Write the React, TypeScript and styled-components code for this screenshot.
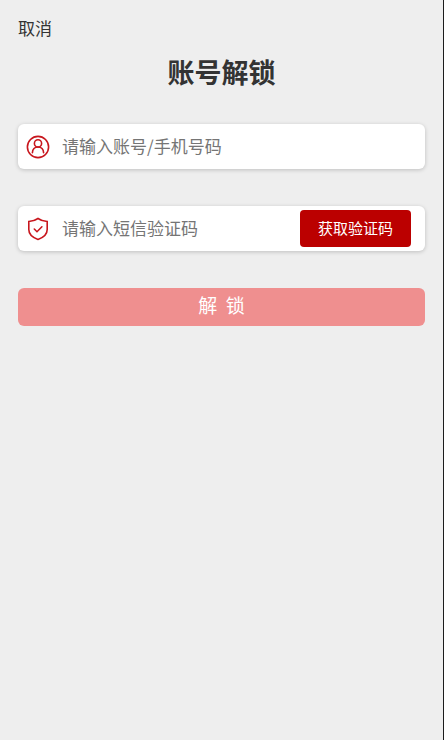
import React, { useState } from "react";
import styled, { createGlobalStyle } from "styled-components";

const GlobalStyle = createGlobalStyle`
  *, *::before, *::after { box-sizing: border-box; }
  body { margin: 0; background: #eeeeee; }
  body, button, input {
    font-family: "Noto Sans CJK SC", "Noto Sans", sans-serif;
  }
`;

const Page = styled.div`
  min-height: 100vh;
  padding: 16px 18px;
  background: #eeeeee;
  border-right: 1px solid #1c1c1c;
`;

const CancelButton = styled.button`
  display: block;
  padding: 0;
  border: 0;
  background: none;
  color: #333333;
  font-size: 17px;
  line-height: 24px;
  cursor: pointer;
`;

const Title = styled.h1`
  margin: 12px 0 32px;
  color: #333333;
  font-size: 27px;
  font-weight: 700;
  line-height: 40px;
  text-align: center;
`;

const Form = styled.form`
  display: flex;
  flex-direction: column;
`;

const Field = styled.div`
  display: flex;
  align-items: center;
  height: 45px;
  margin-bottom: 37px;
  padding: 0 14px 0 8px;
  border-radius: 6px;
  background: #ffffff;
  box-shadow: 0 1px 4px rgba(0, 0, 0, 0.2);
`;

const FieldLabel = styled.label`
  display: flex;
  flex: none;
  margin-right: 12px;
`;

const Icon = styled.svg`
  width: 24px;
  height: 24px;
  fill: none;
  stroke: #c8161d;
  stroke-width: 1.6;
  stroke-linecap: round;
  stroke-linejoin: miter;
`;

const TextInput = styled.input`
  flex: 1;
  min-width: 0;
  height: 32px;
  padding: 0 0 2px;
  border: 0;
  outline: 0;
  background: transparent;
  color: #333333;
  font-size: 17px;

  &::placeholder { color: #757575; opacity: 1; }
`;

const CodeButton = styled.button`
  flex: none;
  height: 37px;
  padding: 0 18px 2px;
  border: 0;
  border-radius: 4px;
  background: #bb0000;
  color: #ffffff;
  font-size: 15px;
  line-height: 34px;
  cursor: pointer;
`;

const SubmitButton = styled.button`
  height: 38px;
  padding: 0 0 4px;
  border: 0;
  border-radius: 6px;
  background: #ef8f8f;
  color: #ffffff;
  font-size: 19px;
  line-height: 34px;
  white-space: pre;
`;

export default function App() {
  const [account, setAccount] = useState("");
  const [code, setCode] = useState("");

  return (
    <>
      <GlobalStyle />
      <Page>
        <CancelButton type="button">取消</CancelButton>
        <Title>账号解锁</Title>
        <Form onSubmit={(event) => event.preventDefault()}>
          <Field>
            <FieldLabel htmlFor="account" aria-label="账号/手机号码">
              <Icon viewBox="0 0 24 24" aria-hidden="true">
                <circle cx="12" cy="12" r="10.6" />
                <circle cx="12" cy="8.4" r="3.6" />
                <path d="M6.4 17.8c.2-3.5 2.5-5.8 5.6-5.8s5.4 2.300 5.600 5.800" />
              </Icon>
            </FieldLabel>
            <TextInput
              id="account"
              placeholder="请输入账号/手机号码"
              value={account}
              onChange={(event) => setAccount(event.target.value)}
            />
          </Field>
          <Field>
            <FieldLabel htmlFor="code" aria-label="短信验证码">
              <Icon viewBox="0 0 24 24" aria-hidden="true">
                <path d="M12 1.500C14.500 3.300 17.500 4.200 21.200 4.500V12.500C21.200 17 17.500 20.500 12 22.400C6.500 20.500 2.800 17 2.800 12.500V4.500C6.500 4.200 9.500 3.300 12 1.500Z" />
                <path d="M8.300 12L11 14.700L15.900 9.800" />
              </Icon>
            </FieldLabel>
            <TextInput
              id="code"
              placeholder="请输入短信验证码"
              inputMode="numeric"
              value={code}
              onChange={(event) => setCode(event.target.value)}
            />
            <CodeButton type="button">获取验证码</CodeButton>
          </Field>
          <SubmitButton type="submit">{"解\u00a0\u00a0锁"}</SubmitButton>
        </Form>
      </Page>
    </>
  );
}
